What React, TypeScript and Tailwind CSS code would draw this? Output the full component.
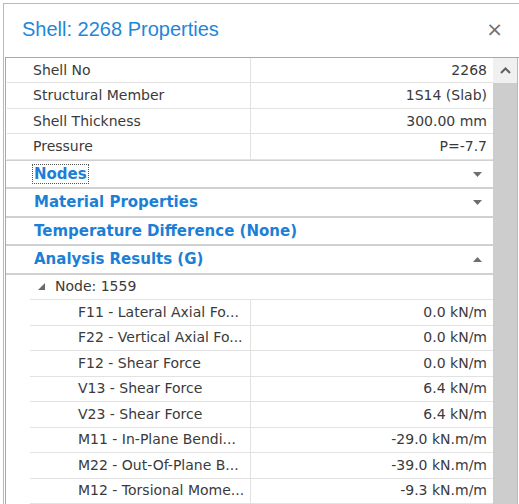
import React from 'react';

type Prop = { label: string; value: string };

const topProps: Prop[] = [
  { label: 'Shell No', value: '2268' },
  { label: 'Structural Member', value: '1S14 (Slab)' },
  { label: 'Shell Thickness', value: '300.00 mm' },
  { label: 'Pressure', value: 'P=-7.7' },
];

const nodeProps: Prop[] = [
  { label: 'F11 - Lateral Axial Fo...', value: '0.0 kN/m' },
  { label: 'F22 - Vertical Axial Fo...', value: '0.0 kN/m' },
  { label: 'F12 - Shear Force', value: '0.0 kN/m' },
  { label: 'V13 - Shear Force', value: '6.4 kN/m' },
  { label: 'V23 - Shear Force', value: '6.4 kN/m' },
  { label: 'M11 - In-Plane Bendi...', value: '-29.0 kN.m/m' },
  { label: 'M22 - Out-Of-Plane B...', value: '-39.0 kN.m/m' },
  { label: 'M12 - Torsional Mome...', value: '-9.3 kN.m/m' },
];

const Caret = ({ up }: { up?: boolean }) => (
  <svg width="9" height="5" viewBox="0 0 9 5" className="fill-[#6e6e6e]">
    {up ? <path d="M0 5 L4.5 0 L9 5 Z" /> : <path d="M0 0 L9 0 L4.5 5 Z" />}
  </svg>
);

const PropRow = ({ p, indent }: { p: Prop; indent?: boolean }) => (
  <div className={`flex h-[25.5px] ${indent ? 'ml-[24px]' : 'ml-[1px]'} border-b border-[#e2e2e2]`}>
    <div
      className={`${indent ? 'w-[221px] pl-[48px]' : 'w-[244px] pl-[26px]'} flex items-center border-r border-[#e2e2e2] whitespace-nowrap overflow-hidden`}
    >
      {p.label}
    </div>
    <div className="flex-1 flex items-center justify-end pr-[6px] whitespace-nowrap">{p.value}</div>
  </div>
);

const Category = ({ title, caret, focus }: { title: string; caret?: 'up' | 'down'; focus?: boolean }) => (
  <div className="flex items-center h-[28.5px] border-b-2 border-[#d0d0d0] pl-[27px] pr-[11px] text-[15px] font-bold text-[#1c7fd6]">
    <span className={focus ? 'outline outline-1 outline-dotted outline-[#555] px-[1px] leading-[18px]' : 'px-[1px]'}>{title}</span>
    <div className="flex-1" />
    {caret && <Caret up={caret === 'up'} />}
  </div>
);

export default function App() {
  return (
    <div className="w-[519px] h-[504px] bg-white overflow-hidden pt-[3px] pl-[3px]">
      <div className="h-full border-t border-l border-[#b9b9b9] flex flex-col">
        <div className="flex items-center justify-between h-[53px] pl-[18px] pr-[16px] pb-[3px]">
          <h1 className="text-[20px] text-[#1e87d9] font-['Liberation_Sans',sans-serif] leading-none">
            Shell: 2268 Properties
          </h1>
          <span className="text-[#707070] text-[20px] leading-none font-['DejaVu_Sans',sans-serif]">×</span>
        </div>
        <div className="flex-1 flex ml-[1px] border-t border-l border-[#a9a9a9] text-[14px] text-[#3a3a3a] font-['DejaVu_Sans',sans-serif] overflow-hidden">
          <div className="flex-1 flex flex-col">
            {topProps.map((p) => (
              <PropRow key={p.label} p={p} />
            ))}
            <div className="border-t border-[#d0d0d0]" />
            <Category title="Nodes" caret="down" focus />
            <Category title="Material Properties" caret="down" />
            <Category title="Temperature Difference (None)" />
            <Category title="Analysis Results (G)" caret="up" />
            <div className="flex items-center h-[25.5px] ml-[24px] border-b border-[#e2e2e2] pl-[8px]">
              <svg width="7" height="7" viewBox="0 0 7 7" className="fill-[#6a6a6a] mr-[10px]">
                <path d="M7 0 L7 7 L0 7 Z" />
              </svg>
              Node: 1559
            </div>
            {nodeProps.map((p) => (
              <PropRow key={p.label} p={p} indent />
            ))}
          </div>
          <div className="w-[25px] flex flex-col border-r border-[#b9b9b9] mr-[1px]">
            <div className="h-[25px] bg-[#f0f0f0] flex items-center justify-center">
              <svg width="11" height="7" viewBox="0 0 11 7" fill="none" stroke="#606060" strokeWidth="2">
                <path d="M1 6 L5.5 1.5 L10 6" />
              </svg>
            </div>
            <div className="flex-1 bg-[#cdcdcd]" />
          </div>
        </div>
      </div>
    </div>
  );
}
